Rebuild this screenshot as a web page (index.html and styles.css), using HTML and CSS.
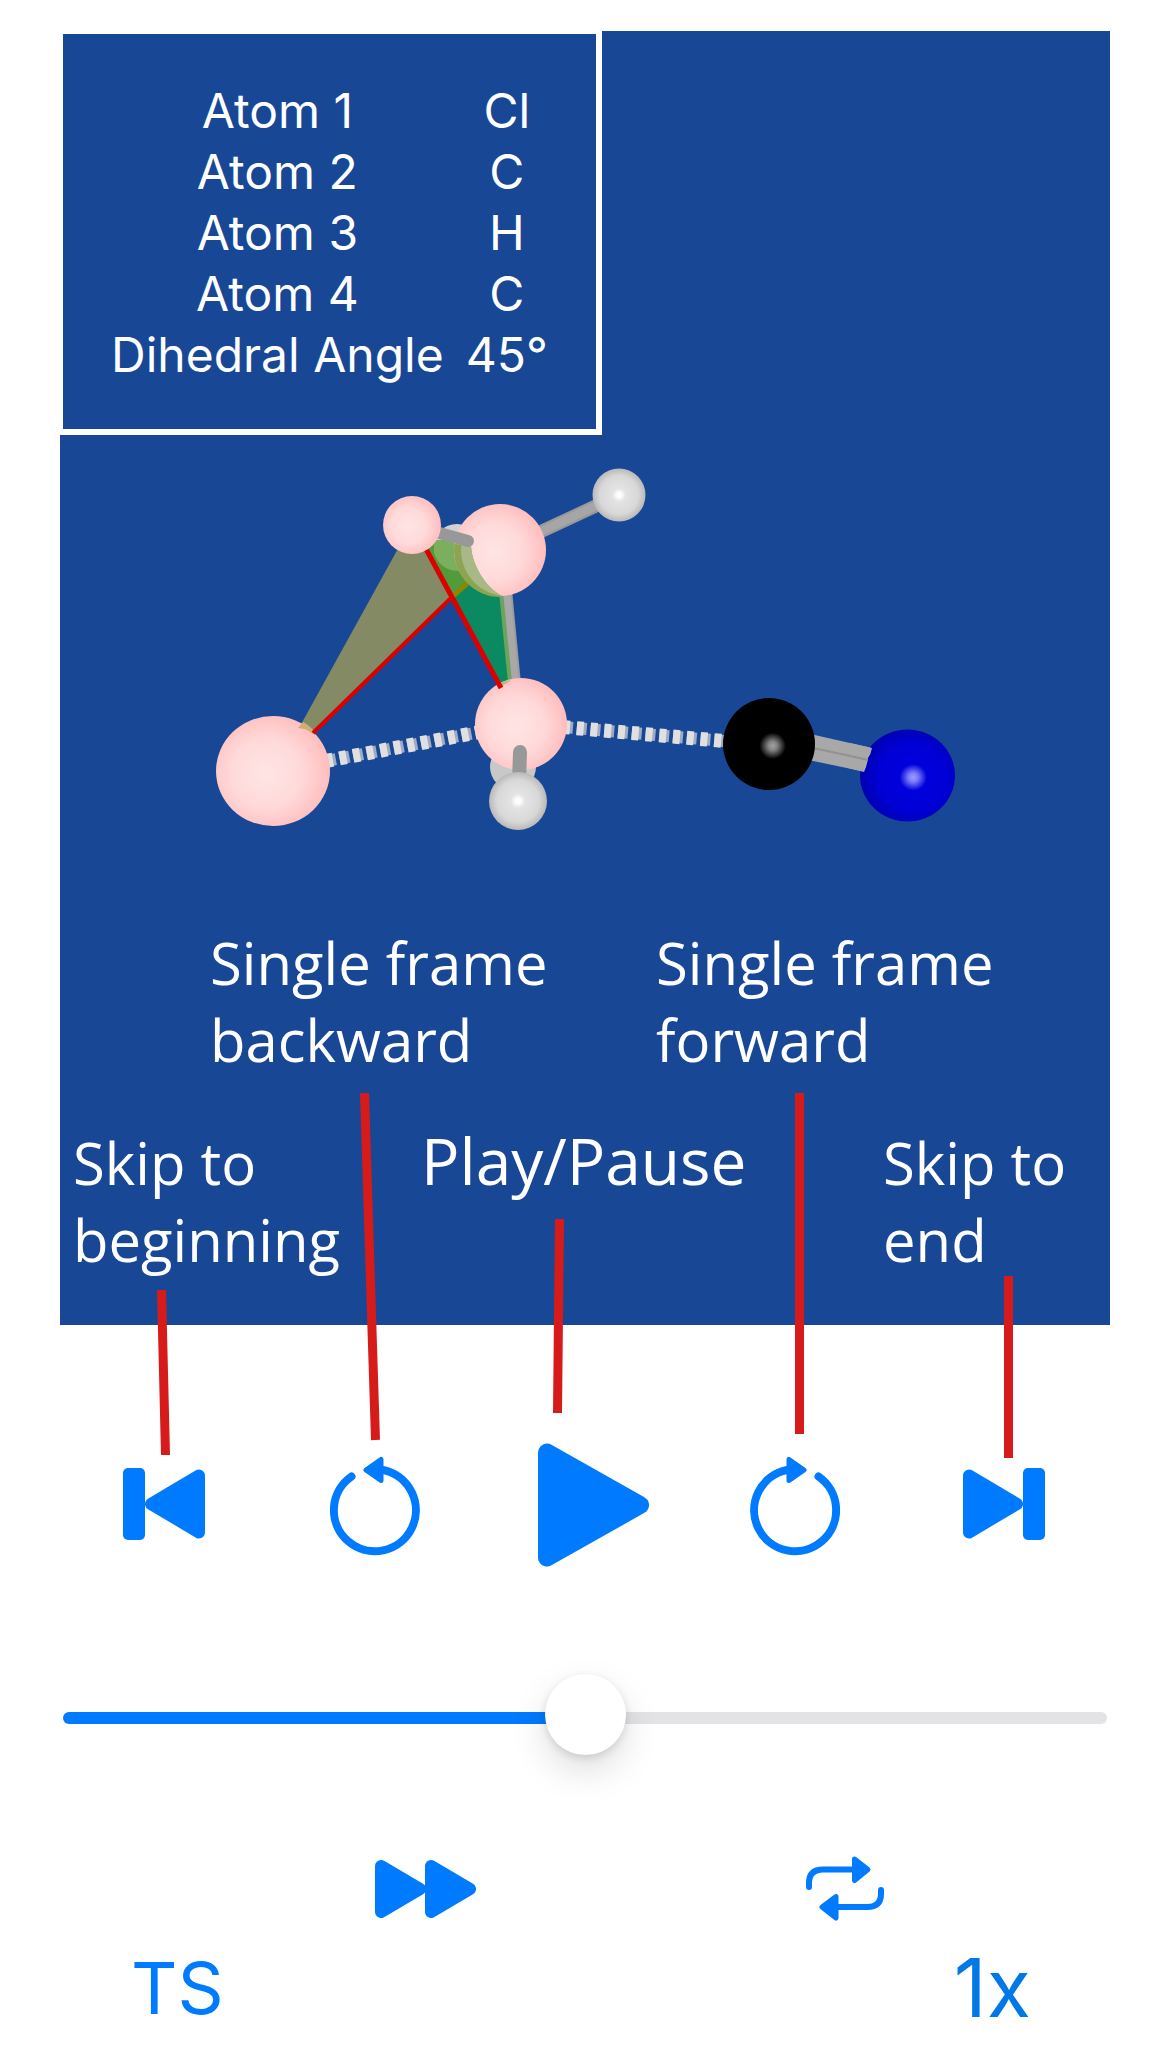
FILE: index.html
```html
<!DOCTYPE html>
<html lang="en">
<head>
<meta charset="utf-8">
<meta name="viewport" content="width=device-width, initial-scale=1">
<title>Reaction player</title>
<link rel="stylesheet" href="styles.css">
</head>
<body>
<main class="player">
  <section class="viewer">
    <div class="info">
      <table class="info-table">
        <tbody>
          <tr><th scope="row">Atom 1</th><td>Cl</td></tr>
          <tr><th scope="row">Atom 2</th><td>C</td></tr>
          <tr><th scope="row">Atom 3</th><td>H</td></tr>
          <tr><th scope="row">Atom 4</th><td>C</td></tr>
          <tr><th scope="row">Dihedral Angle</th><td>45°</td></tr>
        </tbody>
      </table>
    </div>

    <svg class="molecule" viewBox="60 435 1050 489" role="img" aria-label="Transition state with the dihedral planes">
      <defs>
        <radialGradient id="pink" cx="44%" cy="52%" r="60%">
          <stop offset="0" stop-color="#ffe4e4"/><stop offset=".5" stop-color="#ffdada"/><stop offset=".95" stop-color="#ffbcbc"/>
        </radialGradient>
        <radialGradient id="white" cx="50%" cy="50%" r="52%">
          <stop offset="0" stop-color="#fff"/><stop offset=".1" stop-color="#fbfbfb"/><stop offset=".24" stop-color="#e3e3e3"/><stop offset=".7" stop-color="#d8d8d8"/><stop offset="1" stop-color="#b4b4b4"/>
        </radialGradient>
        <radialGradient id="black" cx="54%" cy="52%" r="60%">
          <stop offset="0" stop-color="#a2a2a2"/><stop offset=".08" stop-color="#838383"/><stop offset=".24" stop-color="#000"/>
        </radialGradient>
        <radialGradient id="blue" cx="56%" cy="52%" r="60%">
          <stop offset="0" stop-color="#9a9aff"/><stop offset=".08" stop-color="#7d7dfb"/><stop offset=".24" stop-color="#0000dc"/><stop offset=".6" stop-color="#0000d6"/><stop offset=".95" stop-color="#0000ae"/>
        </radialGradient>
        <clipPath id="front-plane">
          <path d="M426 540L471 546C472 565 486 588 502 596L500 610L440 610Z"/>
        </clipPath>
      </defs>

      <!-- partial bonds -->
      <g fill="none">
        <path stroke="#9fabc6" stroke-width="12" stroke-dasharray="10 3.800" d="M326 761L480 732M563 727L724 741"/>
        <path stroke="#e0e0e0" stroke-width="14" stroke-dasharray="7 6.800" d="M326 761L480 732M563 727L724 741"/>
      </g>

      <!-- full bonds -->
      <path stroke="#999" stroke-width="13" d="M540 532L600 504"/>
      <path stroke="#a6a6a6" stroke-width="9" d="M540 532L600 504"/>
      <path stroke="#9c9c9c" stroke-width="12" d="M506 590L515 684"/>
      <path stroke="#a8a8a8" stroke-width="8" d="M506 590L515 684"/>
      <path fill="#a8a8a8" d="M808 733.500L872 748L866 772L806 759.500Z"/>
      <path stroke="#929292" stroke-width="2" d="M808 747L870 760"/>

      <!-- dihedral planes -->
      <circle cx="457" cy="548" r="24" fill="#d2d2d2"/>
      <path fill="#848a63" d="M400 545L299 728L312 732L452 598L428 548Z"/>
      <path fill="#0b8a61" d="M451 598L467 580L501 592L510 684L502 690Z"/>
      <path fill="#6ba35f" d="M499 592L503 592L512 682L508 683Z"/>
      <path fill="#539a3a" d="M424 540L482 540L482 572L451 598Z"/>
      <path fill="#7baf5e" d="M434 540L481 540A24 24 0 0 1 434 553Z"/>
      <path stroke="#8f8600" stroke-width="5" d="M451 598L470 581"/>
      <circle cx="500" cy="550" r="46" fill="url(#pink)"/>
      <g clip-path="url(#front-plane)">
        <ellipse cx="500" cy="550" rx="46" ry="47" fill="#8da552"/>
        <circle cx="507" cy="550" r="46" fill="#a8b988"/>
      </g>

      <circle cx="513" cy="767" r="23" fill="#c8c8c8"/>
      <circle cx="521" cy="724" r="46" fill="url(#pink)"/>
      <path fill="#c9b080" d="M499 688L502 682L510 680L510 681Z"/>
      <path stroke="#989898" stroke-width="14" stroke-linecap="round" d="M520 752L519 782"/>
      <circle cx="518" cy="801" r="29" fill="url(#white)"/>
      <circle cx="619" cy="495" r="26.500" fill="url(#white)"/>

      <ellipse cx="273" cy="771" rx="57" ry="55" fill="url(#pink)"/>
      <path fill="#cfae76" d="M298 728L303 722Q309 725 315 732L313 734Q306 728 298 728Z"/>
      <path stroke="#dc0000" stroke-width="4" d="M313 733L451 598"/>
      <path stroke="#dc0000" stroke-width="5" d="M426 549L501 688"/>
      <path stroke="#989898" stroke-width="12" stroke-linecap="round" d="M436 532L468 541"/>
      <circle cx="412" cy="525" r="29" fill="url(#pink)"/>

      <circle cx="769" cy="744" r="46" fill="url(#black)"/>
      <ellipse cx="907.500" cy="775.500" rx="47.500" ry="46" fill="url(#blue)"/>
      <path fill="#a8a8a8" d="M850 743L872 748Q871 754 868 758Q867 766 864 772L848 768Z"/>
      <path stroke="#929292" stroke-width="2" d="M848 755.500L868 760"/>
    </svg>

    <div class="labels labels-frame">
      <p>Single frame<br>backward</p>
      <p>Single frame<br>forward</p>
    </div>
    <div class="labels labels-skip">
      <p>Skip to<br>beginning</p>
      <p class="label-play">Play/Pause</p>
      <p>Skip to<br>end</p>
    </div>

    <svg class="pointers" viewBox="0 0 1050 365" preserveAspectRatio="none" aria-hidden="true">
      <path d="M101.500 197L105.500 362M304.500 0L315.500 347M499.500 126L497.500 320M739.500 0V341M948.500 183V365"/>
    </svg>
  </section>

  <div class="controls">
    <button type="button" aria-label="Skip to beginning">
      <svg width="82" height="124" viewBox="0 0 82 124"><rect y="25" width="22" height="72" rx="5"/><path class="round" d="M28 61L76 32.500V89.500Z"/></svg>
    </button>
    <button type="button" aria-label="Single frame backward">
      <svg width="90" height="124" viewBox="0 0 90 124"><path class="line" d="M53 27A41 41 0 1 1 21.500 33.500"/><path class="tip" d="M36 27L51 16.500V37.500Z"/></svg>
    </button>
    <button type="button" aria-label="Play or pause">
      <svg width="111" height="124" viewBox="0 0 111 124"><path class="round-large" d="M9 9.500L102 62L9 114.500Z"/></svg>
    </button>
    <button type="button" aria-label="Single frame forward">
      <svg width="90" height="124" viewBox="0 0 90 124"><path class="line" d="M37 27A41 41 0 1 0 68.500 33.500"/><path class="tip" d="M54 27L39 16.500V37.500Z"/></svg>
    </button>
    <button type="button" aria-label="Skip to end">
      <svg width="82" height="124" viewBox="0 0 82 124"><rect x="60" y="25" width="22" height="72" rx="5"/><path class="round" d="M54 61L6 32.500V89.500Z"/></svg>
    </button>
  </div>

  <input class="timeline" type="range" min="0" max="100" value="50" aria-label="Position">

  <div class="modes">
    <button type="button" aria-label="Fast forward">
      <svg width="101" height="65" viewBox="0 0 101 65"><path class="round" d="M6 10L45 33L6 56Z"/><path class="round" d="M56 10L95 33L56 56Z"/></svg>
    </button>
    <button type="button" aria-label="Repeat">
      <svg width="78" height="65" viewBox="0 0 78 65"><path class="line thin" d="M3 31V27Q3 13.500 17 13.500H48M75 34V38Q75 51 61 51H30"/><path class="tip" d="M48.500 3L62 13.500L48.500 24.500Z"/><path class="tip" d="M30 40.500L16 51L30 62Z"/></svg>
    </button>
  </div>

  <div class="readouts">
    <button type="button" class="state">TS</button>
    <button type="button" class="speed">1x</button>
  </div>
</main>
</body>
</html>
```
FILE: styles.css
```css
* { box-sizing: border-box; }

body {
  margin: 0;
  background: #fff;
  font-family: "Inter", "Liberation Sans", sans-serif;
}

.player { padding: 31px 60px 43px; }

/* Structure view */
.viewer {
  position: relative;
  background: #184796;
  color: #fff;
  padding-bottom: 47px;
}

.info {
  width: max-content;
  padding: 46px 26px 44px;
  border: 3px solid #fff;
  border-right-width: 6px;
  border-bottom-width: 6px;
}

.info-table {
  border-collapse: separate;
  border-spacing: 22px 0;
  font-size: 48px;
  line-height: 61px;
  text-align: center;
}

.info-table th,
.info-table td {
  padding: 0;
  font-weight: 400;
}

.molecule {
  display: block;
  width: 100%;
  height: auto;
}

.labels {
  display: grid;
  align-items: baseline;
  font-family: "Open Sans", "Noto Sans", sans-serif;
  font-size: 58px;
  line-height: 77px;
  white-space: nowrap;
}

.labels p { margin: 0; }

.labels-frame {
  grid-template-columns: 150fr 446fr 454fr;
}

.labels-frame p:first-child { grid-column: 2; }

.labels-skip {
  grid-template-columns: 348fr 462fr 227fr;
  padding-left: 13px;
  margin-top: 44px;
}

.labels .label-play { font-size: 64px; }

/* Pointer lines run from the labels down to the buttons below the view */
.pointers {
  position: absolute;
  left: 0;
  bottom: -133px;
  width: 100%;
  height: 365px;
  fill: none;
  stroke: #d71b1b;
  stroke-width: 9px;
  pointer-events: none;
}

/* Controls */
button {
  padding: 0;
  border: 0;
  background: none;
  color: #007aff;
  font: inherit;
  cursor: pointer;
}

button svg {
  display: block;
  fill: currentColor;
  stroke: currentColor;
  stroke-width: 0;
  stroke-linejoin: round;
  stroke-linecap: round;
}

button .round { stroke-width: 12px; }
button .round-large { stroke-width: 18px; }
button .tip { stroke-width: 5px; }
button .line { fill: none; stroke-width: 8px; }
button .thin { stroke-width: 6px; }

.controls {
  display: grid;
  grid-template-columns: 207fr 208fr 212fr 213fr 147fr;
  justify-items: start;
  padding-left: 63px;
  margin-top: 118px;
}

.timeline {
  -webkit-appearance: none;
  appearance: none;
  display: block;
  width: calc(100% - 6px);
  height: 88px;
  margin: 107px 3px 0;
  background: none;
}

.timeline::-webkit-slider-runnable-track {
  height: 12px;
  border-radius: 6px;
  background: linear-gradient(to right, #007aff 50%, #e3e3e5 50%);
}

.timeline::-webkit-slider-thumb {
  -webkit-appearance: none;
  width: 81px;
  height: 81px;
  margin-top: -38px;
  border: 0;
  border-radius: 50%;
  background: #fff;
  box-shadow: 0 16px 36px rgba(0, 0, 0, .13), 0 3px 8px rgba(0, 0, 0, .12);
}

.modes {
  display: grid;
  grid-template-columns: 315fr 431fr 304fr;
  justify-items: start;
  margin-top: 94px;
}

.modes button:first-child { grid-column: 2; }

.readouts {
  display: flex;
  justify-content: space-between;
  align-items: center;
  margin-top: 27px;
  padding: 0 79px 0 71px;
  line-height: 80px;
}

.readouts .state { font-size: 72px; }

.readouts .speed {
  font-size: 81px;
  color: #0078e8;
}
```
